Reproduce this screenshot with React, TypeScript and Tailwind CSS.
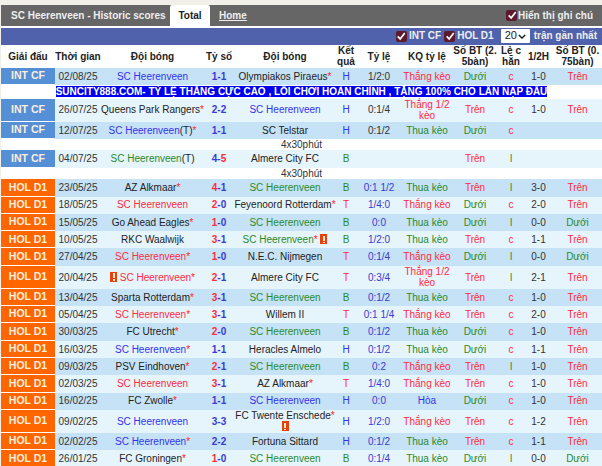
import React from "react";

const BLUE = "text-[#3333ee]";
const RED = "text-[#ff2b3f]";
const GREEN = "text-[#2a8a2a]";
const DARK = "text-[#222]";

type Match = {
  league: "INT CF" | "HOL D1";
  date: string;
  home: React.ReactNode;
  s1: [string, string];
  away: React.ReactNode;
  side: string;
  odds: string;
  oddsBlue?: boolean;
  kq: string;
  bt: string;
  lc: string;
  half: string;
  bt2: string;
  h: string;
};

const Star = () => <span className="text-[#f22]">*</span>;

const Card = () => (
  <span className="inline-block w-[7px] h-[10px] bg-[#e8400c] align-[-1px] relative">
    <span className="absolute left-[2.5px] top-[1.5px] w-[2px] h-[5px] bg-[#ffe9c8]" />
    <span className="absolute left-[2.5px] top-[7.5px] w-[2px] h-[1.5px] bg-[#ffe9c8]" />
  </span>
);

const Team = ({ c, star, t, card, pre }: { c: string; star?: boolean; t?: boolean; card?: boolean; pre?: boolean }) => (
  <span className={c}>
    {pre && (
      <>
        <Card />{" "}
      </>
    )}
    SC Heerenveen
    {t && <span className={DARK}>(T)</span>}
    {star && <Star />}
    {card && (
      <>
        {" "}
        <Card />
      </>
    )}
  </span>
);

const Other = ({ n, star }: { n: string; star?: boolean }) => (
  <span className={DARK}>
    {n}
    {star && <Star />}
  </span>
);

const S = "h-[17.3px]";

const rows: Match[] = [
  { league: "INT CF", date: "02/08/25", home: <Team c={BLUE} />, s1: ["b", "b"], away: <Other n="Olympiakos Piraeus" star />, side: "H", odds: "1/2:0", kq: "Thắng kèo", bt: "Dưới", lc: "c", half: "1-0", bt2: "Trên", h: "h-[16.7px]" },
  { league: "INT CF", date: "26/07/25", home: <Other n="Queens Park Rangers" star />, s1: ["b", "b"], away: <Team c={BLUE} />, side: "H", odds: "0:1/4", kq: "Thắng 1/2 kèo", bt: "Trên", lc: "c", half: "1-0", bt2: "Trên", h: "h-[23px]" },
  { league: "INT CF", date: "12/07/25", home: <Team c={BLUE} t star />, s1: ["b", "b"], away: <Other n="SC Telstar" />, side: "H", odds: "0:1/2", kq: "Thua kèo", bt: "Dưới", lc: "c", half: "", bt2: "", h: S },
  { league: "INT CF", date: "04/07/25", home: <Team c={GREEN} t />, s1: ["b", "r"], away: <Other n="Almere City FC" />, side: "B", odds: "", kq: "", bt: "Trên", lc: "l", half: "", bt2: "", h: S },
  { league: "HOL D1", date: "23/05/25", home: <Other n="AZ Alkmaar" star />, s1: ["r", "b"], away: <Team c={GREEN} />, side: "B", odds: "0:1 1/2", oddsBlue: true, kq: "Thua kèo", bt: "Trên", lc: "l", half: "3-0", bt2: "Trên", h: S },
  { league: "HOL D1", date: "18/05/25", home: <Team c={RED} />, s1: ["r", "b"], away: <Other n="Feyenoord Rotterdam" star />, side: "T", odds: "1/4:0", oddsBlue: true, kq: "Thắng kèo", bt: "Dưới", lc: "c", half: "2-0", bt2: "Trên", h: S },
  { league: "HOL D1", date: "15/05/25", home: <Other n="Go Ahead Eagles" star />, s1: ["r", "b"], away: <Team c={GREEN} />, side: "B", odds: "0:0", oddsBlue: true, kq: "Thua kèo", bt: "Dưới", lc: "l", half: "0-0", bt2: "Dưới", h: S },
  { league: "HOL D1", date: "10/05/25", home: <Other n="RKC Waalwijk" />, s1: ["r", "b"], away: <Team c={GREEN} star card />, side: "B", odds: "1/2:0", oddsBlue: true, kq: "Thua kèo", bt: "Trên", lc: "c", half: "1-1", bt2: "Trên", h: S },
  { league: "HOL D1", date: "27/04/25", home: <Team c={RED} star />, s1: ["r", "b"], away: <Other n="N.E.C. Nijmegen" />, side: "T", odds: "0:1/4", oddsBlue: true, kq: "Thắng kèo", bt: "Dưới", lc: "l", half: "0-0", bt2: "Dưới", h: S },
  { league: "HOL D1", date: "20/04/25", home: <Team c={RED} star pre />, s1: ["r", "b"], away: <Other n="Almere City FC" />, side: "T", odds: "0:3/4", oddsBlue: true, kq: "Thắng 1/2 kèo", bt: "Trên", lc: "l", half: "2-1", bt2: "Trên", h: "h-[23px]" },
  { league: "HOL D1", date: "13/04/25", home: <Other n="Sparta Rotterdam" star />, s1: ["r", "b"], away: <Team c={GREEN} />, side: "B", odds: "0:1/2", oddsBlue: true, kq: "Thua kèo", bt: "Trên", lc: "c", half: "1-0", bt2: "Trên", h: S },
  { league: "HOL D1", date: "05/04/25", home: <Team c={RED} star />, s1: ["r", "b"], away: <Other n="Willem II" />, side: "T", odds: "0:1 1/4", oddsBlue: true, kq: "Thắng kèo", bt: "Trên", lc: "c", half: "2-0", bt2: "Trên", h: S },
  { league: "HOL D1", date: "30/03/25", home: <Other n="FC Utrecht" star />, s1: ["r", "b"], away: <Team c={GREEN} />, side: "B", odds: "0:1/2", oddsBlue: true, kq: "Thua kèo", bt: "Dưới", lc: "c", half: "1-0", bt2: "Trên", h: S },
  { league: "HOL D1", date: "16/03/25", home: <Team c={BLUE} star />, s1: ["b", "b"], away: <Other n="Heracles Almelo" />, side: "H", odds: "0:1/2", oddsBlue: true, kq: "Thua kèo", bt: "Dưới", lc: "c", half: "1-1", bt2: "Trên", h: S },
  { league: "HOL D1", date: "09/03/25", home: <Other n="PSV Eindhoven" star />, s1: ["r", "b"], away: <Team c={GREEN} />, side: "B", odds: "0:2", oddsBlue: true, kq: "Thắng kèo", bt: "Trên", lc: "l", half: "1-0", bt2: "Trên", h: S },
  { league: "HOL D1", date: "02/03/25", home: <Team c={RED} />, s1: ["r", "b"], away: <Other n="AZ Alkmaar" star />, side: "T", odds: "1/4:0", oddsBlue: true, kq: "Thắng kèo", bt: "Trên", lc: "c", half: "1-0", bt2: "Trên", h: S },
  { league: "HOL D1", date: "16/02/25", home: <Other n="FC Zwolle" star />, s1: ["b", "b"], away: <Team c={BLUE} />, side: "H", odds: "0:0", oddsBlue: true, kq: "Hòa", bt: "Dưới", lc: "c", half: "1-0", bt2: "Trên", h: S },
  {
    league: "HOL D1",
    date: "09/02/25",
    home: <Team c={BLUE} />,
    s1: ["b", "b"],
    away: (
      <span className={DARK}>
        FC Twente Enschede
        <Star />
        <br />
        <Card />
      </span>
    ),
    side: "H",
    odds: "1/2:0",
    oddsBlue: true,
    kq: "Thắng kèo",
    bt: "Trên",
    lc: "c",
    half: "1-2",
    bt2: "Trên",
    h: "h-[23px]",
  },
  { league: "HOL D1", date: "02/02/25", home: <Team c={BLUE} star />, s1: ["b", "b"], away: <Other n="Fortuna Sittard" />, side: "H", odds: "0:1/2", oddsBlue: true, kq: "Thua kèo", bt: "Trên", lc: "c", half: "1-1", bt2: "Trên", h: S },
  { league: "HOL D1", date: "26/01/25", home: <Other n="FC Groningen" star />, s1: ["r", "b"], away: <Team c={GREEN} />, side: "B", odds: "0:1/4", oddsBlue: true, kq: "Thua kèo", bt: "Dưới", lc: "l", half: "0-0", bt2: "Dưới", h: S },
];

const scores: [string, string][] = [
  ["1", "1"], ["2", "2"], ["1", "1"], ["4", "5"], ["4", "1"], ["2", "0"], ["1", "0"], ["3", "1"], ["1", "0"], ["2", "1"],
  ["3", "1"], ["3", "1"], ["2", "0"], ["1", "1"], ["2", "1"], ["3", "1"], ["1", "1"], ["3", "3"], ["2", "2"], ["1", "0"],
];

const word = (w: string) => {
  if (w.startsWith("Thắng") || w === "Trên") return RED;
  if (w === "Hòa") return BLUE;
  return GREEN;
};

const sideColor = (s: string) => (s === "H" ? BLUE : s === "B" ? GREEN : RED);

const Checkbox = () => (
  <span className="inline-flex items-center justify-center w-[11px] h-[11px] rounded-[2px] bg-[#5c1a2e] align-[-2px]">
    <svg viewBox="0 0 12 12" className="w-[10px] h-[10px]" fill="none" stroke="#fff" strokeWidth="2">
      <path d="M2 6.5 5 9.5 10.5 2.5" />
    </svg>
  </span>
);

const Row = ({ m, i }: { m: Match; i: number }) => {
  const [a, b] = m.s1;
  const nums = scores[i];
  return (
    <tr className={`${m.h} ${i % 2 === 0 ? "bg-[#c6e2f6]" : "bg-[#e6f4fc]"}`}>
      <td className={`border-b border-white font-bold text-[10.5px] text-[#fdeede] ${m.league === "INT CF" ? "bg-[#5590d6]" : "bg-[#ff6600]"}`}>
        {m.league}
      </td>
      <td className="text-[#333]">{m.date}</td>
      <td className="whitespace-nowrap">{m.home}</td>
      <td className="font-bold">
        <span className={a === "r" ? RED : "text-[#3a3ad0]"}>{nums[0]}</span>
        <span className="text-[#3a3ad0]">-</span>
        <span className={b === "r" ? RED : "text-[#3a3ad0]"}>{nums[1]}</span>
      </td>
      <td>{m.away}</td>
      <td className={sideColor(m.side)}>{m.side}</td>
      <td className={m.oddsBlue ? "text-[#3a3ad0]" : "text-[#333]"}>{m.odds}</td>
      <td className={word(m.kq)}>
        {m.kq === "Thắng 1/2 kèo" ? (
          <>
            Thắng 1/2
            <br />
            kèo
          </>
        ) : (
          m.kq
        )}
      </td>
      <td className={word(m.bt)}>{m.bt}</td>
      <td className={m.lc === "c" ? RED : GREEN}>{m.lc}</td>
      <td className="text-[#333]">{m.half}</td>
      <td className={word(m.bt2)}>{m.bt2}</td>
    </tr>
  );
};

const Note = ({ children, h }: { children: React.ReactNode; h: string }) => (
  <tr className={`${h} bg-white`}>
    <td colSpan={12} className="text-[#333]">
      {children}
    </td>
  </tr>
);

export default function App() {
  return (
    <div className="w-[602px] h-[466px] overflow-hidden bg-[#f1f0e8] pt-[5px] pl-[1px] font-['Liberation_Sans',Arial,sans-serif] text-[10px] leading-[11.5px]">
      <div className="flex items-stretch h-[20.5px] bg-[#666] text-[#eee] font-bold">
        <div className="w-[169px] pl-[10px] flex items-center whitespace-nowrap">SC Heerenveen - Historic scores</div>
        <div className="w-[40px] bg-white text-[#222] rounded-t-[2px] flex items-center justify-center h-[21px]">Total</div>
        <div className="ml-[9px] flex items-center underline">Home</div>
        <div className="ml-auto pr-[9px] flex items-center gap-[1px]">
          <Checkbox />
          Hiển thị ghi chú
        </div>
      </div>
      <div className="h-[2px] bg-white" />
      <div className="flex items-center justify-end h-[17px] bg-[#4f62ab] text-[#eee] font-bold pr-[5px]">
        <Checkbox />
        <span className="ml-[2px]">INT CF</span>
        <span className="ml-[3px] flex">
          <Checkbox />
        </span>
        <span className="ml-[2px]">HOL D1</span>
        <span className="ml-[7px] w-[29px] h-[14px] bg-white rounded-[1px] text-[#222] font-normal flex items-center justify-between px-[4px] text-[11px]">
          20
          <svg viewBox="0 0 10 6" className="w-[8px] h-[5px]" fill="none" stroke="#222" strokeWidth="1.8">
            <path d="M1 1 5 5 9 1" />
          </svg>
        </span>
        <span className="ml-[4px]">trận gần nhất</span>
      </div>
      <table className="w-[601px] table-fixed border-separate border-spacing-0 bg-white text-center">
        <colgroup>
          <col className="w-[54px]" />
          <col className="w-[46px]" />
          <col className="w-[103px]" />
          <col className="w-[30px]" />
          <col className="w-[102px]" />
          <col className="w-[20px]" />
          <col className="w-[46px]" />
          <col className="w-[50px]" />
          <col className="w-[46px]" />
          <col className="w-[26px]" />
          <col className="w-[29px]" />
          <col className="w-[49px]" />
        </colgroup>
        <thead>
          <tr className="h-[23.5px] font-bold text-[#222]">
            <th>Giải đấu</th>
            <th>Thời gian</th>
            <th>Đội bóng</th>
            <th>Tỷ số</th>
            <th>Đội bóng</th>
            <th>Kết quả</th>
            <th>Tỷ lệ</th>
            <th>KQ tỷ lệ</th>
            <th>Số BT (2. 5bàn)</th>
            <th>Lẻ c hẵn</th>
            <th>1/2H</th>
            <th>Số BT (0. 75bàn)</th>
          </tr>
        </thead>
        <tbody>
          {rows.map((m, i) => (
            <React.Fragment key={m.date}>
              {i === 1 && (
                <Note h="h-[14px]">
                  <span className="bg-[#0000ee] text-white font-bold">
                    SUNCITY888.COM- TỶ LỆ THẮNG CỰC CAO , LỐI CHƠI HOÀN CHỈNH , TẶNG 100% CHO LẦN NẠP ĐẦU
                  </span>
                </Note>
              )}
              <Row m={m} i={i} />
              {(i === 2 || i === 3) && <Note h="h-[11.5px]">4x30phút</Note>}
            </React.Fragment>
          ))}
        </tbody>
      </table>
    </div>
  );
}
